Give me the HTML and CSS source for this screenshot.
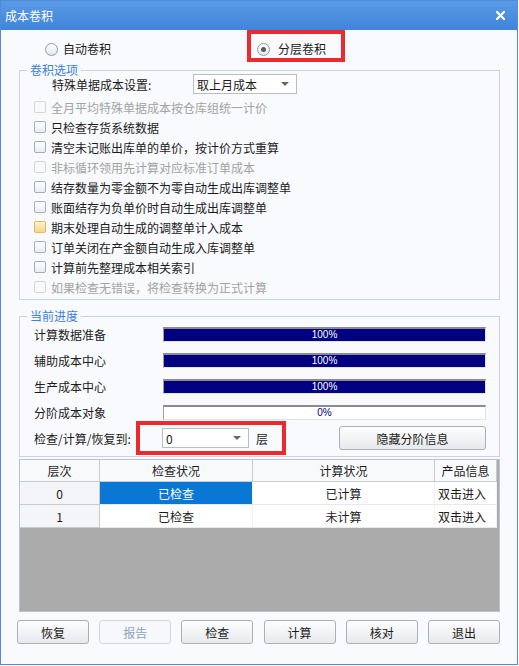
FILE: index.html
```html
<!DOCTYPE html>
<html lang="zh-CN">
<head>
  <meta charset="UTF-8" />
  <meta name="viewport" content="width=device-width, initial-scale=1.0"/>
  <title>成本卷积</title>
  <link rel="stylesheet" href="styles.css">
</head>
<body>
  <div class="window">
    <div class="titlebar">
      <span>成本卷积</span>
      <svg class="close" width="9" height="9" viewBox="0 0 9 9"><path d="M1 1L8 8M8 1L1 8" stroke="#fff" stroke-width="2.2" stroke-linecap="square"/></svg>
    </div>

    <div class="mode-row">
      <label class="radio auto"><span class="dot"></span>自动卷积</label>
      <div class="mark mark-mode">
        <label class="radio"><span class="dot on"></span>分层卷积</label>
      </div>
    </div>

    <fieldset class="group opts">
      <legend>卷积选项</legend>
      <div class="setting">
        <span class="setting-label">特殊单据成本设置:</span>
        <div class="combo wide">取上月成本<span class="arrow"></span></div>
      </div>
      <label class="check off"><span class="box"></span>全月平均特殊单据成本按仓库组统一计价</label>
      <label class="check"><span class="box"></span>只检查存货系统数据</label>
      <label class="check"><span class="box"></span>清空未记账出库单的单价，按计价方式重算</label>
      <label class="check off"><span class="box"></span>非标循环领用先计算对应标准订单成本</label>
      <label class="check"><span class="box"></span>结存数量为零金额不为零自动生成出库调整单</label>
      <label class="check"><span class="box"></span>账面结存为负单价时自动生成出库调整单</label>
      <label class="check"><span class="box hot"></span>期末处理自动生成的调整单计入成本</label>
      <label class="check"><span class="box"></span>订单关闭在产金额自动生成入库调整单</label>
      <label class="check"><span class="box"></span>计算前先整理成本相关索引</label>
      <label class="check off"><span class="box"></span>如果检查无错误，将检查转换为正式计算</label>
    </fieldset>

    <fieldset class="group progress">
      <legend>当前进度</legend>
      <div class="steps">
        <div class="prow">
          <span class="plabel">计算数据准备</span>
          <div class="bar"><div class="fill" style="width:100%"></div><span class="pct">100%</span></div>
        </div>
        <div class="prow">
          <span class="plabel">辅助成本中心</span>
          <div class="bar"><div class="fill" style="width:100%"></div><span class="pct">100%</span></div>
        </div>
        <div class="prow">
          <span class="plabel">生产成本中心</span>
          <div class="bar"><div class="fill" style="width:100%"></div><span class="pct">100%</span></div>
        </div>
        <div class="prow">
          <span class="plabel">分阶成本对象</span>
          <div class="bar"><div class="fill" style="width:0%"></div><span class="pct empty">0%</span></div>
        </div>
      </div>
      <div class="level-row">
        <span class="level-label">检查/计算/恢复到:</span>
        <div class="mark mark-level">
          <div class="combo narrow">0<span class="arrow"></span></div>
          <span>层</span>
        </div>
        <button class="btn hide-btn">隐藏分阶信息</button>
      </div>
    </fieldset>

    <div class="grid">
      <table>
        <thead>
          <tr><th class="c0">层次</th><th class="c1">检查状况</th><th class="c2">计算状况</th><th class="c3">产品信息</th></tr>
        </thead>
        <tbody>
          <tr><td class="rh">0</td><td class="sel">已检查</td><td>已计算</td><td class="info">双击进入</td></tr>
          <tr><td class="rh">1</td><td>已检查</td><td>未计算</td><td class="info">双击进入</td></tr>
        </tbody>
      </table>
    </div>

    <div class="actions">
      <button class="btn">恢复</button>
      <button class="btn" disabled>报告</button>
      <button class="btn">检查</button>
      <button class="btn">计算</button>
      <button class="btn">核对</button>
      <button class="btn">退出</button>
    </div>
  </div>
</body>
</html>
```

FILE: styles.css
```css
body { margin: 0; background: #fff; font-family: "Noto Sans CJK SC", "Noto Sans", sans-serif; font-size: 12px; color: #1b1b1b; }
.window { width: 518px; height: 665px; box-sizing: border-box; border: 1px solid #4d8ddb; background: #f8fafd; display: flex; flex-direction: column; }

.titlebar { height: 29px; flex: none; display: flex; align-items: center; justify-content: space-between; padding: 0 12px 0 4px; background: linear-gradient(#5b9be5, #3f84d9); color: #fff; font-size: 12px; line-height: 14px; }
.close { display: block; }

.mode-row { height: 32px; flex: none; display: flex; padding-left: 44px; }
.radio { display: flex; align-items: center; gap: 5px; line-height: 16px; }
.radio.auto { padding-top: 6px; }
.dot { width: 13px; height: 13px; box-sizing: border-box; border-radius: 50%; border: 1px solid #8f9aaa; background: linear-gradient(#fdfdfd, #e4e8ee); display: flex; align-items: center; justify-content: center; }
.dot.on::after { content: ""; width: 5px; height: 5px; border-radius: 50%; background: #5b5b5b; }

.mark { box-sizing: border-box; border: 4px solid #ec2a2e; display: flex; align-items: center; }
.mark-mode { margin-left: 136px; width: 98px; padding: 6px 0 0 6px; }
.mark-mode .radio { gap: 8px; }

.group { margin: 0 0 0 18px; width: 481px; box-sizing: border-box; border: 1px solid #c7d3e4; padding: 0 13px 2px 14px; min-inline-size: 0; }
.group legend { margin-left: -7px; padding: 0 3px; font-size: 12px; line-height: 12px; color: #3d80de; }
.opts { margin-top: 2px; }

.setting { height: 20px; margin-top: -2px; margin-bottom: 3px; display: flex; align-items: center; padding-left: 18px; }
.setting-label { width: 141px; }
.combo { height: 20px; box-sizing: border-box; border: 1px solid #b6bec9; background: #fff; display: flex; align-items: center; justify-content: space-between; padding: 0 7px 0 3px; }
.combo.wide { width: 104px; }
.combo.narrow { width: 87px; }
.arrow { width: 0; height: 0; border-left: 4px solid transparent; border-right: 4px solid transparent; border-top: 4px solid #666; }

.check { height: 20px; display: flex; align-items: center; gap: 5px; }
.box { width: 12px; height: 12px; box-sizing: border-box; border: 1px solid #a3aebd; border-radius: 2px; background: linear-gradient(#fff, #e9edf2); }
.box.hot { border-color: #dcb868; background: linear-gradient(#fff3cf, #f9d68a); }
.check.off { color: #a3a3a3; }
.check.off .box { border-color: #d2d8e0; background: #f9fafc; }

.progress { margin-top: 10px; padding-bottom: 1px; }
.steps { margin-top: -1px; }
.prow { height: 26px; display: flex; align-items: center; }
.plabel { width: 129px; }
.bar { flex: 1; height: 15px; box-sizing: border-box; border-top: 2px solid #8b8b8b; border-left: 1px solid #9d9d9d; border-right: 1px solid #e2e2e2; border-bottom: 1px solid #e2e2e2; background: #fff; display: grid; }
.fill { grid-area: 1 / 1; background: #000080; }
.pct { grid-area: 1 / 1; text-align: center; font-family: "Liberation Sans", sans-serif; font-size: 10px; line-height: 12px; color: #fff; }
.pct.empty { color: #000080; }

.level-row { height: 34px; margin-top: -4px; display: flex; align-items: center; }
.level-label { width: 102px; }
.mark-level { width: 150px; height: 34px; padding-left: 22px; gap: 7px; }

.btn { height: 24px; box-sizing: border-box; border: 1px solid #aab0b8; border-radius: 3px; background: linear-gradient(#fefefe, #e7e9ed); font-family: inherit; font-size: 12px; color: #1b1b1b; padding: 0; }
.btn:disabled { color: #8ea3bc; border-color: #d3d8df; background: #f6f8fb; }
.hide-btn { width: 147px; margin-left: auto; }

.grid { margin: 2px 0 0 18px; width: 481px; height: 153px; box-sizing: border-box; border: 1px solid #bac3cf; background: #ababab; }
.grid table { border-collapse: collapse; table-layout: fixed; width: 473px; }
.grid th { height: 21px; padding: 0; font-weight: normal; background: #f8f9fb; border-right: 1px solid #c6ccd4; border-bottom: 1px solid #c6ccd4; }
.grid td { height: 22px; padding: 0; text-align: center; background: #fff; border-bottom: 1px solid #e6e9ee; border-right: 1px solid #f0f2f5; }
.grid td.rh { background: #f3f5f8; border-right: 1px solid #c6ccd4; border-bottom: 1px solid #c6ccd4; }
.grid td.sel { background: #0a77d5; color: #fff; }
.grid td.info { text-align: left; padding-left: 3px; }
.c0 { width: 79px; }
.c1 { width: 152px; }
.c2 { width: 181px; }
.c3 { width: 61px; }

.actions { margin-top: 8px; padding: 0 17px 0 16px; display: flex; justify-content: space-between; }
.actions .btn { width: 72px; }
```
